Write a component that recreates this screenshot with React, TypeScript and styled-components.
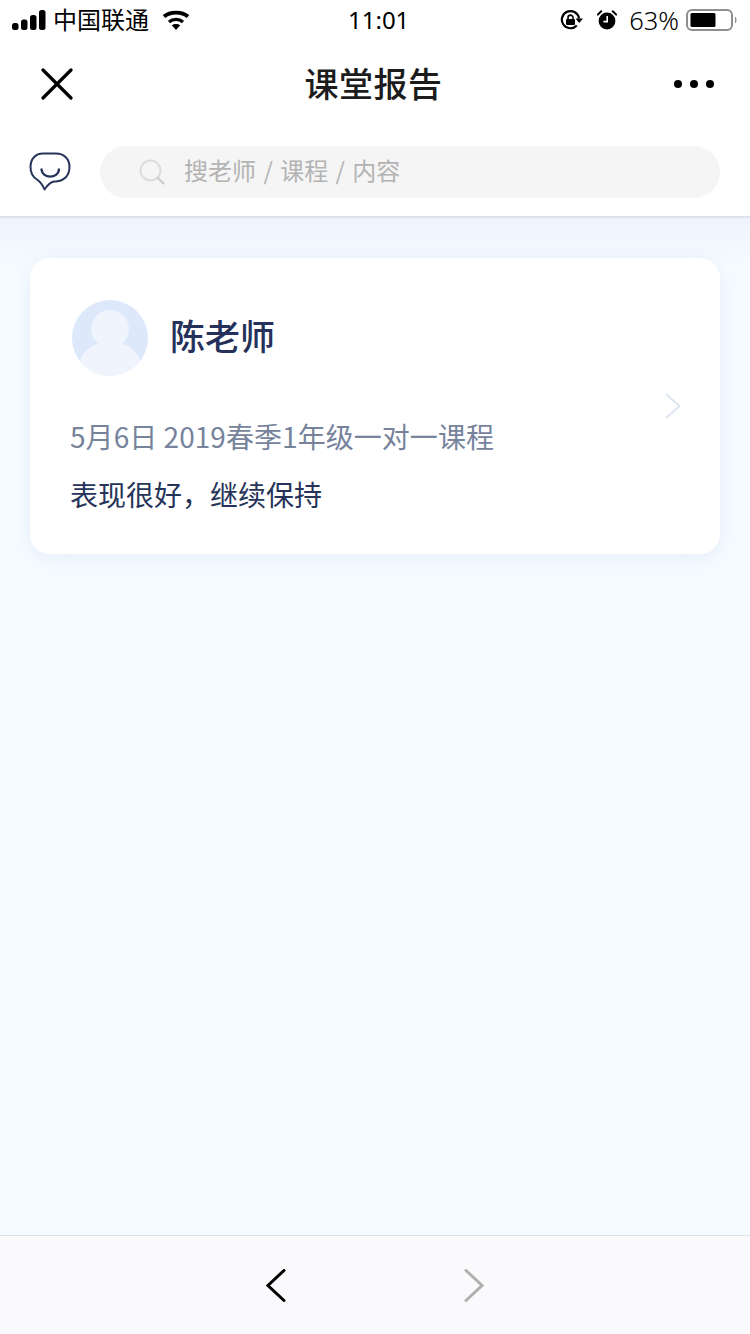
import React from 'react';
import styled, { createGlobalStyle } from 'styled-components';

const GlobalStyle = createGlobalStyle`
  html, body {
    margin: 0;
    padding: 0;
    background: #f6fbff;
    font-family: 'Noto Sans CJK SC', 'Noto Sans', sans-serif;
  }
  * { box-sizing: border-box; }
`;

function SignalIcon() {
  return (
    <svg width="34" height="20" viewBox="0 0 34 20">
      <rect x="0" y="13" width="6.5" height="7" rx="2.5" fill="#000" />
      <rect x="9" y="9.5" width="6.5" height="10.5" rx="2.5" fill="#000" />
      <rect x="18" y="5" width="6.5" height="15" rx="2.5" fill="#000" />
      <rect x="27" y="0" width="6.5" height="20" rx="2.5" fill="#000" />
    </svg>
  );
}

function WifiIcon() {
  return (
    <svg width="28" height="20" viewBox="0 0 28 20">
      <path d="M2 6.5 C8 1.2 20 1.2 26 6.5" fill="none" stroke="#000" strokeWidth="3.8" />
      <path d="M7 12 C11 8.5 17 8.5 21 12" fill="none" stroke="#000" strokeWidth="3.4" />
      <path d="M9.8 15.3 C12 13.5 16 13.5 18.2 15.3 L14 20 Z" fill="#000" />
    </svg>
  );
}

function RotationLockIcon() {
  return (
    <svg width="24" height="22" viewBox="0 0 24 22">
      <path d="M19 9.5 A8.6 8.6 0 1 0 16.8 16.5" fill="none" stroke="#000" strokeWidth="2.2" />
      <path d="M15.5 9.5 L23 9.5 L19.2 14 Z" fill="#000" />
      <rect x="6" y="10" width="9" height="6" rx="1" fill="#000" />
      <path d="M8 10.5 V8.6 A2.5 2.5 0 0 1 13 8.6 V10.5" fill="none" stroke="#000" strokeWidth="1.6" />
    </svg>
  );
}

function AlarmIcon() {
  return (
    <svg width="20" height="20" viewBox="0 0 20 20">
      <circle cx="10" cy="11" r="8.4" fill="#000" />
      <path d="M10.2 6 V11.6 H6.4" fill="none" stroke="#fff" strokeWidth="1.6" />
      <path d="M0.8 4.6 L4.2 1.2" stroke="#000" strokeWidth="2" strokeLinecap="round" />
      <path d="M19.2 4.6 L15.8 1.2" stroke="#000" strokeWidth="2" strokeLinecap="round" />
    </svg>
  );
}

function BatteryIcon() {
  return (
    <svg width="52" height="24" viewBox="0 0 52 24">
      <rect x="1" y="2" width="45" height="20" rx="5" fill="none" stroke="#8e8e8e" strokeWidth="2" />
      <rect x="4.5" y="5" width="25" height="14" rx="1.5" fill="#000" />
      <path d="M49 8.5 C51 10 51 14 49 15.5 Z" fill="#8e8e8e" />
    </svg>
  );
}

function CloseIcon() {
  return (
    <svg width="32" height="32" viewBox="0 0 32 32">
      <path d="M2 2 L30 30 M30 2 L2 30" stroke="#000" strokeWidth="3.2" strokeLinecap="round" />
    </svg>
  );
}

function ChatIcon() {
  return (
    <svg width="42" height="40" viewBox="0 0 42 40">
      <path
        d="M14 1.5 H27 C35 1.5 40.5 7 40.5 15 C40.5 23.5 35 29 27 29.5 H25 C21 30 18.5 33 15.5 37.5 C14 33.5 11.5 30 8 27.5 C4 25 1.5 20.5 1.5 15 C1.5 7 6.5 1.5 14 1.5 Z"
        fill="none"
        stroke="#27345a"
        strokeWidth="2"
        strokeLinejoin="round"
      />
      <path d="M12.5 17.5 C13.5 27 29 27 30 17.5" fill="none" stroke="#27345a" strokeWidth="2.4" strokeLinecap="round" />
    </svg>
  );
}

function SearchIcon() {
  return (
    <svg width="26" height="26" viewBox="0 0 26 26">
      <circle cx="11.5" cy="11.5" r="10" fill="none" stroke="#dcdcdc" strokeWidth="2" />
      <path d="M19 19 L24.5 24.5" stroke="#c9c9c9" strokeWidth="2" strokeLinecap="round" />
    </svg>
  );
}

function AvatarIcon() {
  return (
    <svg width="76" height="76" viewBox="0 0 76 76">
      <defs>
        <clipPath id="avatar-clip">
          <circle cx="38" cy="38" r="38" />
        </clipPath>
      </defs>
      <circle cx="38" cy="38" r="38" fill="#dde8fb" />
      <g clipPath="url(#avatar-clip)" fill="#eff4fd">
        <circle cx="38" cy="29" r="19" />
        <ellipse cx="38" cy="66" rx="31" ry="24" />
      </g>
    </svg>
  );
}

function Chevron({ dir, color, width }: { dir: 'left' | 'right'; color: string; width: number }) {
  const d = dir === 'left' ? 'M18 1.5 L2 16.5 L18 31.5' : 'M2 1.5 L18 16.5 L2 31.5';
  return (
    <svg width="20" height="33" viewBox="0 0 20 33">
      <path d={d} fill="none" stroke={color} strokeWidth={width} strokeLinecap="round" strokeLinejoin="miter" />
    </svg>
  );
}

export default function App() {
  return (
    <>
      <GlobalStyle />
      <Page>
        <Header>
          <StatusBar>
            <StatusSide>
              <SignalIcon />
              <Carrier>中国联通</Carrier>
              <WifiSlot>
                <WifiIcon />
              </WifiSlot>
            </StatusSide>
            <Clock>11:01</Clock>
            <StatusRight>
              <RotationLockIcon />
              <AlarmSlot>
                <AlarmIcon />
              </AlarmSlot>
              <Percent>63%</Percent>
              <BatteryIcon />
            </StatusRight>
          </StatusBar>
          <NavBar>
            <CloseIcon />
            <Title>课堂报告</Title>
            <MoreDots>
              <Dot />
              <Dot />
              <Dot />
            </MoreDots>
          </NavBar>
          <SearchRow>
            <ChatIcon />
            <SearchBox>
              <SearchIcon />
              <Placeholder>搜老师 / 课程 / 内容</Placeholder>
            </SearchBox>
          </SearchRow>
        </Header>
        <Content>
          <Card>
            <Teacher>
              <AvatarIcon />
              <TeacherName>陈老师</TeacherName>
            </Teacher>
            <CourseLine>5月6日 2019春季1年级一对一课程</CourseLine>
            <Comment>表现很好，继续保持</Comment>
            <CardArrow>
              <svg width="18" height="28" viewBox="0 0 18 28">
                <path d="M2 2 L15.5 14 L2 26" fill="none" stroke="#dde5f0" strokeWidth="2" />
              </svg>
            </CardArrow>
          </Card>
        </Content>
        <Footer>
          <Chevron dir="left" color="#000" width={3} />
          <Chevron dir="right" color="#b0b0b0" width={3} />
        </Footer>
      </Page>
    </>
  );
}

const Page = styled.div`
  width: 750px;
  height: 1334px;
  display: flex;
  flex-direction: column;
  overflow: hidden;
  background: #f6fbff;
`;

const Header = styled.header`
  background: #fff;
  border-bottom: 2px solid #dbe3ee;
  height: 218px;
  flex-shrink: 0;
`;

const StatusBar = styled.div`
  height: 40px;
  padding: 0 12px;
  display: flex;
  align-items: center;
  justify-content: space-between;
  position: relative;
  color: #000;
`;

const StatusSide = styled.div`
  display: flex;
  align-items: center;
  gap: 7px;
`;

const StatusRight = styled.div`
  display: flex;
  align-items: center;
`;

const Carrier = styled.span`
  font-size: 24px;
  line-height: 40px;
  font-weight: 400;
  margin-top: -2px;
`;

const WifiSlot = styled.span`
  display: flex;
  margin-left: 6px;
`;

const AlarmSlot = styled.span`
  display: flex;
  margin-left: 13px;
`;

const Clock = styled.span`
  position: absolute;
  left: 348px;
  font-family: 'Noto Sans', sans-serif;
  font-size: 24px;
  font-weight: 400;
  line-height: 40px;
`;

const Percent = styled.span`
  font-family: 'Noto Sans', sans-serif;
  font-size: 25.5px;
  font-weight: 300;
  margin: 0 7px 0 12px;
  line-height: 40px;
`;

const NavBar = styled.div`
  height: 88px;
  padding: 0 36px 0 41px;
  display: flex;
  align-items: center;
  justify-content: space-between;
`;

const Title = styled.h1`
  margin: 0 0 2px;
  font-size: 34px;
  font-weight: 500;
  line-height: 48px;
  letter-spacing: 0.5px;
  color: #1c1c1c;
`;

const MoreDots = styled.div`
  display: flex;
  gap: 8px;
`;

const Dot = styled.span`
  width: 8px;
  height: 8px;
  border-radius: 50%;
  background: #000;
`;

const SearchRow = styled.div`
  padding: 18px 30px 0 29px;
  display: flex;
  align-items: center;
  gap: 29px;
`;

const SearchBox = styled.div`
  flex: 1;
  height: 52px;
  border-radius: 26px;
  background: #f5f5f5;
  padding-left: 39px;
  display: flex;
  align-items: center;
  gap: 19px;
`;

const Placeholder = styled.span`
  font-size: 24px;
  line-height: 34px;
  color: #b3b3b3;
  font-weight: 400;
  word-spacing: 2px;
  margin-bottom: 4px;
`;

const Content = styled.main`
  flex: 1;
  padding: 40px 30px 0;
  background: linear-gradient(#edf4fc 0, #f6fbff 50px);
`;

const Card = styled.section`
  position: relative;
  height: 296px;
  padding: 42px 40px 0;
  border-radius: 20px;
  background: #fff;
  box-shadow: 0 4px 20px rgba(200, 216, 240, 0.35);
`;

const Teacher = styled.div`
  display: flex;
  align-items: center;
  gap: 22px;
  padding-left: 2px;
`;

const TeacherName = styled.span`
  font-size: 35px;
  font-weight: 500;
  color: #25315a;
  margin-bottom: 7px;
`;

const CourseLine = styled.p`
  margin: 36px 0 0;
  font-size: 28px;
  line-height: 48px;
  font-weight: 400;
  letter-spacing: 0.05px;
  color: #76839b;
`;

const Comment = styled.p`
  margin: 10px 0 0;
  font-size: 28px;
  line-height: 48px;
  font-weight: 400;
  color: #27345a;
`;

const CardArrow = styled.span`
  position: absolute;
  right: 38px;
  top: 134px;
  display: flex;
`;

const Footer = styled.footer`
  height: 99px;
  flex-shrink: 0;
  border-top: 1px solid #e0e0e6;
  background: #fafafc;
  display: flex;
  align-items: center;
  justify-content: center;
  gap: 178px;
`;
